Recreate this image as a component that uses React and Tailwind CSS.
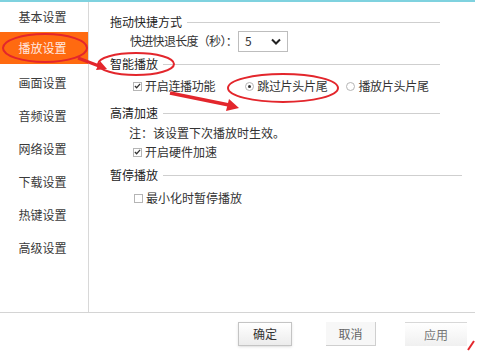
import React from 'react';

const font = { fontFamily: '"Noto Sans CJK SC", "Noto Sans", sans-serif' };

function Check({ checked }) {
  return (
    <span className="w-[9px] h-[9px] border border-[#b5b5b5] bg-white flex items-center justify-center shrink-0">
      {checked && (
        <svg width="8" height="8" viewBox="0 0 8 8">
          <path d="M1 4 L3 6 L7 1.5" fill="none" stroke="#333" strokeWidth="1.4" />
        </svg>
      )}
    </span>
  );
}

function Radio({ checked }) {
  return (
    <span className="w-[9px] h-[9px] rounded-full border border-[#b5b5b5] bg-white flex items-center justify-center shrink-0">
      {checked && <span className="w-[3px] h-[3px] rounded-full bg-[#333]" />}
    </span>
  );
}

function GroupTitle({ title, width, mt }) {
  return (
    <div className={`flex items-center h-[18px] gap-[5px] ${width} ${mt}`}>
      <span className="text-[12px] text-[#222] leading-none">{title}</span>
      <span className="flex-1 h-px bg-[#cfcfcf]" />
    </div>
  );
}

const menu = ['画面设置', '音频设置', '网络设置', '下载设置', '热键设置', '高级设置'];

export default function App() {
  return (
    <div className="relative w-[483px] h-[356px] bg-white overflow-hidden text-[#333]" style={font}>
      <div className="w-[475px] h-[313px] flex border-t-2 border-[#7fd2df] border-b border-b-[#d4d4d4]">
        {/* sidebar */}
        <div className="w-[89px] border-r border-[#d8d8d8] flex flex-col text-[12px] text-[#3a3a3a]">
          <div className="h-[30px] flex items-center justify-center pr-[3px]">基本设置</div>
          <div className="h-[32px] flex items-center justify-center bg-[#ff6a10] text-[#ffe9e0] pr-[3px]">播放设置</div>
          <div className="mt-[2px] flex flex-col">
            {menu.map((m) => (
              <div key={m} className="h-[33px] flex items-center justify-center pr-[3px]">{m}</div>
            ))}
          </div>
        </div>

        {/* content */}
        <div className="flex-1 pl-[21px] pt-[11px] flex flex-col text-[12px]">
          <GroupTitle title="拖动快捷方式" width="w-[330px]" mt="" />
          <div className="h-[20px] flex items-center pl-[20px] gap-[1px]">
            <span className="leading-none tracking-[-0.7px]">快进快退长度（秒）：</span>
            <div className="w-[50px] h-[21px] border border-[#bdbdbd] flex items-center justify-between pl-[6px] pr-[6px] bg-white">
              <span className="leading-none">5</span>
              <svg width="10" height="7" viewBox="0 0 10 7">
                <path d="M1 1.5 L5 5.5 L9 1.5" fill="none" stroke="#222" strokeWidth="2" />
              </svg>
            </div>
          </div>

          <GroupTitle title="智能播放" width="w-[330px]" mt="mt-[4px]" />
          <div className="h-[18px] mt-[4px] flex items-center pl-[23px]">
            <Check checked />
            <span className="ml-[3px] leading-none tracking-[-0.3px]">开启连播功能</span>
            <span className="ml-[30px]"><Radio checked /></span>
            <span className="ml-[3px] leading-none tracking-[-0.3px]">跳过片头片尾</span>
            <span className="ml-[19px]"><Radio /></span>
            <span className="ml-[3px] leading-none tracking-[-0.3px]">播放片头片尾</span>
          </div>

          <GroupTitle title="高清加速" width="w-[330px]" mt="mt-[9px]" />
          <div className="h-[18px] mt-[2px] flex items-center pl-[19px] leading-none">注：该设置下次播放时生效。</div>
          <div className="h-[18px] mt-[1px] flex items-center pl-[23px]">
            <Check checked />
            <span className="ml-[3px] leading-none">开启硬件加速</span>
          </div>

          <GroupTitle title="暂停播放" width="w-[352px]" mt="mt-[5px]" />
          <div className="h-[18px] mt-[5px] flex items-center pl-[24px]">
            <Check />
            <span className="ml-[3px] leading-none">最小化时暂停播放</span>
          </div>
        </div>
      </div>

      {/* buttons */}
      <div className="flex items-start pt-[9px] text-[12px]">
        <div className="ml-[238px] w-[54px] h-[24px] border border-[#c4c4c4] bg-gradient-to-b from-white to-[#ececec] flex items-center justify-center text-[#333] shadow-sm">确定</div>
        <div className="ml-[34px] w-[50px] h-[24px] border-r border-b border-[#cfcfcf] bg-[#f7f7f7] flex items-center justify-center text-[#666]">取消</div>
        <div className="ml-[29px] w-[62px] h-[24px] border-t border-[#d8d8d8] bg-gradient-to-b from-white to-[#f0f0f0] flex items-center justify-center text-[#777]">应用</div>
      </div>

      {/* red annotations */}
      <svg className="absolute inset-0 pointer-events-none" width="483" height="356" viewBox="0 0 483 356">
        <ellipse cx="45" cy="48" rx="42" ry="14" fill="none" stroke="#e3262c" strokeWidth="2" />
        <ellipse cx="136" cy="64" rx="38" ry="11" fill="none" stroke="#e3262c" strokeWidth="2" />
        <ellipse cx="283" cy="88" rx="55" ry="14" fill="none" stroke="#e3262c" strokeWidth="2" />
        <line x1="78" y1="58" x2="99" y2="66" stroke="#e3262c" strokeWidth="3" />
        <polygon points="107,69 96,70 100,61" fill="#e3262c" />
        <line x1="170" y1="93" x2="229" y2="105" stroke="#e3262c" strokeWidth="3.5" />
        <polygon points="239,108 226,111 229,99" fill="#e3262c" />
        <line x1="468" y1="350" x2="474" y2="341" stroke="#e3262c" strokeWidth="2" />
      </svg>
    </div>
  );
}
